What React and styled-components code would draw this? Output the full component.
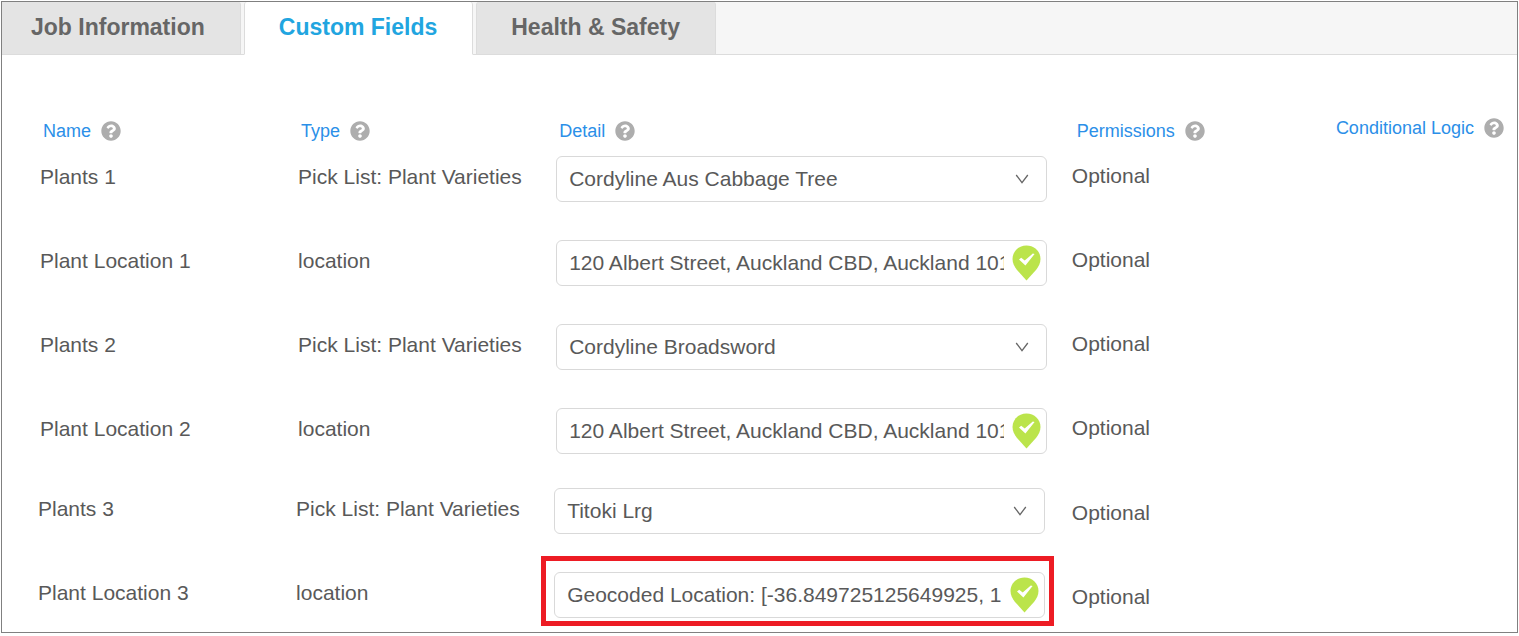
import React, { useState } from 'react';
import styled, { createGlobalStyle } from 'styled-components';
import { FaQuestionCircle } from 'react-icons/fa';

const GlobalStyle = createGlobalStyle`
  * {
    box-sizing: border-box;
  }

  body {
    margin: 0;
    background: #fff;
    color: #595959;
    font-family: 'Liberation Sans', Arial, sans-serif;
    font-size: 21px;
    line-height: 24px;
  }
`;

const PageStyled = styled.main`
  margin: 1px;
  border: 1px solid #808080;
`;

const TabListStyled = styled.div`
  display: flex;
  gap: 3px;
  background: #f6f6f6;
  border-bottom: 1px solid #dcdcdc;
`;

const TabStyled = styled.button`
  height: 53px;
  margin-bottom: -1px;
  padding: 0 35px 2px 34px;
  border: 1px solid #dcdcdc;
  border-top: 0;
  border-bottom-color: ${({ $active }) => ($active ? '#fff' : '#dcdcdc')};
  border-radius: 3px 3px 0 0;
  background: ${({ $active }) => ($active ? '#fff' : '#e4e4e4')};
  color: ${({ $active }) => ($active ? '#21a5e0' : '#666')};
  font-family: inherit;
  font-size: 23px;
  font-weight: bold;
  line-height: 24px;
  cursor: pointer;

  &:first-child {
    padding-left: 29px;
    border-left: 0;
    border-radius: 0 3px 0 0;
  }
`;

const PanelStyled = styled.section`
  padding: 61px 0 0 36px;
`;

const TableStyled = styled.table`
  width: 100%;
  table-layout: fixed;
  border-collapse: collapse;

  th,
  td {
    padding: 0;
    vertical-align: top;
    text-align: left;
    white-space: nowrap;
  }
`;

const ColStyled = styled.col`
  width: ${({ $width }) => $width};
`;

const HeadCellStyled = styled.th`
  height: 40px;
  font-weight: normal;
`;

const HeadLabelStyled = styled.span`
  display: flex;
  align-items: center;
  gap: 10px;
  padding: ${({ $raised }) => ($raised ? '0 0 0 6px' : '3px 0 0 5px')};
  color: #2b8fe8;
  font-size: 18px;
`;

const HelpStyled = styled.button`
  display: flex;
  padding: 0;
  border: 0;
  background: none;
  color: #adadad;
  font-size: 20px;
  cursor: help;
`;

const SectionStyled = styled.tbody`
  --inset: ${({ $shifted }) => ($shifted ? '0px' : '2px')};
  --outset: ${({ $shifted }) => ($shifted ? '27px' : '25px')};
  --permission-top: ${({ $shifted }) => ($shifted ? '13px' : '8px')};

  tr {
    height: 84px;
  }

  tr:last-child {
    height: ${({ $shifted }) => ($shifted ? '60px' : '80px')};
  }
`;

const TextCellStyled = styled.td`
  && {
    padding: 9px 0 0 var(--inset);
  }
`;

const DetailCellStyled = styled.td`
  && {
    padding: 0 var(--outset) 0 var(--inset);
  }
`;

const PermissionCellStyled = styled.td`
  && {
    padding-top: var(--permission-top);
  }
`;

const FieldStyled = styled.div`
  position: relative;
  height: 46px;
  border: 1px solid #d9d9d9;
  border-radius: 6px;
  background: #fff;
`;

const SelectFieldStyled = styled(FieldStyled)`
  display: grid;
  align-items: center;

  select,
  svg {
    grid-area: 1 / 1;
  }

  svg {
    justify-self: end;
    margin-right: 17px;
    pointer-events: none;
  }
`;

const SelectStyled = styled.select`
  width: 100%;
  height: 44px;
  padding: 0 40px 0 12px;
  border: 0;
  border-radius: 6px;
  background: none;
  appearance: none;
  color: inherit;
  font: inherit;
`;

const LocationFieldStyled = styled(FieldStyled)`
  display: flex;
  align-items: center;
  gap: 8px;
  padding: 0 5px 0 12px;

  svg {
    flex: none;
  }
`;

const InputStyled = styled.input`
  flex: 1;
  min-width: 0;
  height: 44px;
  padding: 0;
  border: 0;
  outline: 0;
  background: none;
  color: inherit;
  font: inherit;
`;

const HighlightStyled = styled.div`
  position: absolute;
  inset: -17px -10px -9px -14px;
  border: 5px solid #ed1c24;
  pointer-events: none;
`;

const TABS = ['Job Information', 'Custom Fields', 'Health & Safety'];

const COLUMNS = [
  { title: 'Name', width: '17.45%' },
  { title: 'Type', width: '17.45%' },
  { title: 'Detail', width: '35%' },
  { title: 'Permissions', width: '17.45%' },
  { title: 'Conditional Logic', raised: true },
];

const VARIETIES = ['Cordyline Aus Cabbage Tree', 'Cordyline Broadsword', 'Titoki Lrg'];

const ADDRESS = '120 Albert Street, Auckland CBD, Auckland 1010, New Zealand';

const SECTIONS = [
  {
    id: 'main',
    fields: [
      { name: 'Plants 1', kind: 'list', value: 'Cordyline Aus Cabbage Tree' },
      { name: 'Plant Location 1', kind: 'location', value: ADDRESS },
      { name: 'Plants 2', kind: 'list', value: 'Cordyline Broadsword' },
      { name: 'Plant Location 2', kind: 'location', value: ADDRESS },
    ],
  },
  {
    id: 'added',
    shifted: true,
    fields: [
      { name: 'Plants 3', kind: 'list', value: 'Titoki Lrg' },
      {
        name: 'Plant Location 3',
        kind: 'location',
        value: 'Geocoded Location: [-36.849725125649925, 174.76]',
        highlighted: true,
      },
    ],
  },
];

function ChevronIcon() {
  return (
    <svg width="14" height="10" viewBox="0 0 14 10" fill="none" aria-hidden="true">
      <path d="M1.2 1 7 8.6 12.8 1" stroke="#666" strokeWidth="1.3" />
    </svg>
  );
}

function PinIcon() {
  return (
    <svg width="29" height="36" viewBox="0 0 29 36" aria-hidden="true">
      <path
        d="M14.5 .5C6.6 .5 .5 6.5 .5 14c0 4.1 1.9 7.5 4.3 10.7L14.5 35.5 24.2 24.7C26.6 21.5 28.5 18.1 28.5 14 28.5 6.5 22.4 .5 14.5 .5Z"
        fill="#bbe44b"
      />
      <path d="M7 14.5 9.2 12.8 12.7 15.6 20.8 8.6 22.6 9 13.4 20.4Z" fill="#fff" />
    </svg>
  );
}

function DetailField({ field }) {
  const [value, setValue] = useState(field.value);
  const handleChange = (e) => setValue(e.target.value);

  if (field.kind === 'list') {
    return (
      <SelectFieldStyled>
        <SelectStyled aria-label={field.name} value={value} onChange={handleChange}>
          {VARIETIES.map((variety) => (
            <option key={variety}>{variety}</option>
          ))}
        </SelectStyled>
        <ChevronIcon />
      </SelectFieldStyled>
    );
  }

  return (
    <LocationFieldStyled>
      <InputStyled type="text" aria-label={field.name} value={value} onChange={handleChange} />
      <PinIcon />
      {field.highlighted && <HighlightStyled />}
    </LocationFieldStyled>
  );
}

export default function App() {
  const [activeTab, setActiveTab] = useState('Custom Fields');

  return (
    <PageStyled>
      <GlobalStyle />
      <TabListStyled role="tablist">
        {TABS.map((tab) => (
          <TabStyled
            key={tab}
            type="button"
            role="tab"
            aria-selected={tab === activeTab}
            $active={tab === activeTab}
            onClick={() => setActiveTab(tab)}
          >
            {tab}
          </TabStyled>
        ))}
      </TabListStyled>
      <PanelStyled>
        <TableStyled>
          <colgroup>
            {COLUMNS.map((column) => (
              <ColStyled key={column.title} $width={column.width || 'auto'} />
            ))}
          </colgroup>
          <thead>
            <tr>
              {COLUMNS.map((column) => (
                <HeadCellStyled key={column.title} scope="col">
                  <HeadLabelStyled $raised={column.raised}>
                    {column.title}
                    <HelpStyled type="button" aria-label={`About ${column.title}`}>
                      <FaQuestionCircle />
                    </HelpStyled>
                  </HeadLabelStyled>
                </HeadCellStyled>
              ))}
            </tr>
          </thead>
          {SECTIONS.map((section) => (
            <SectionStyled key={section.id} $shifted={section.shifted}>
              {section.fields.map((field) => (
                <tr key={field.name}>
                  <TextCellStyled>{field.name}</TextCellStyled>
                  <TextCellStyled>
                    {field.kind === 'list' ? 'Pick List: Plant Varieties' : 'location'}
                  </TextCellStyled>
                  <DetailCellStyled>
                    <DetailField field={field} />
                  </DetailCellStyled>
                  <PermissionCellStyled>Optional</PermissionCellStyled>
                  <td />
                </tr>
              ))}
            </SectionStyled>
          ))}
        </TableStyled>
      </PanelStyled>
    </PageStyled>
  );
}
